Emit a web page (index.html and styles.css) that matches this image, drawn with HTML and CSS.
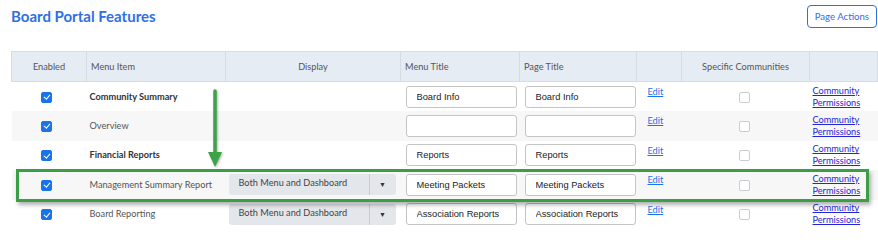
FILE: index.html
```html
<!DOCTYPE html>
<html>
<head>
  <meta charset="UTF-8">
  <title>Board Portal Features</title>
  <link rel="stylesheet" href="styles.css">
</head>
<body>
  <div class="page">
    <div class="topbar">
      <h1 class="title">Board Portal Features</h1>
      <button class="btn-outline">Page Actions</button>
    </div>

    <table class="features">
      <colgroup>
        <col class="c-enabled"><col class="c-item"><col class="c-display"><col class="c-mtitle">
        <col class="c-ptitle"><col class="c-edit"><col class="c-spec"><col class="c-perm">
      </colgroup>
      <thead>
        <tr>
          <th class="center">Enabled</th>
          <th>Menu Item</th>
          <th class="center">Display</th>
          <th>Menu Title</th>
          <th>Page Title</th>
          <th></th>
          <th class="center">Specific Communities</th>
          <th></th>
        </tr>
      </thead>
      <tbody>
        <tr>
          <td class="center"><span class="check on"></span></td>
          <td class="item strong">Community Summary</td>
          <td></td>
          <td class="field"><input class="txt" value="Board Info"></td>
          <td class="field"><input class="txt" value="Board Info"></td>
          <td class="edit"><a href="#">Edit</a></td>
          <td class="center"><span class="check"></span></td>
          <td class="perm"><a href="#">Community</a><a href="#">Permissions</a></td>
        </tr>
        <tr>
          <td class="center"><span class="check on"></span></td>
          <td class="item">Overview</td>
          <td></td>
          <td class="field"><input class="txt" value=""></td>
          <td class="field"><input class="txt" value=""></td>
          <td class="edit"><a href="#">Edit</a></td>
          <td class="center"><span class="check"></span></td>
          <td class="perm"><a href="#">Community</a><a href="#">Permissions</a></td>
        </tr>
        <tr>
          <td class="center"><span class="check on"></span></td>
          <td class="item strong">Financial Reports</td>
          <td></td>
          <td class="field"><input class="txt" value="Reports"></td>
          <td class="field"><input class="txt" value="Reports"></td>
          <td class="edit"><a href="#">Edit</a></td>
          <td class="center"><span class="check"></span></td>
          <td class="perm"><a href="#">Community</a><a href="#">Permissions</a></td>
        </tr>
        <tr>
          <td class="center"><span class="check on"></span></td>
          <td class="item">Management Summary Report</td>
          <td class="sel-cell"><div class="select"><span class="sel-text">Both Menu and Dashboard</span><span class="sel-arrow">&#9660;</span></div></td>
          <td class="field"><input class="txt" value="Meeting Packets"></td>
          <td class="field"><input class="txt" value="Meeting Packets"></td>
          <td class="edit"><a href="#">Edit</a></td>
          <td class="center"><span class="check"></span></td>
          <td class="perm"><a href="#">Community</a><a href="#">Permissions</a></td>
        </tr>
        <tr>
          <td class="center"><span class="check on"></span></td>
          <td class="item">Board Reporting</td>
          <td class="sel-cell"><div class="select"><span class="sel-text">Both Menu and Dashboard</span><span class="sel-arrow">&#9660;</span></div></td>
          <td class="field"><input class="txt" value="Association Reports"></td>
          <td class="field"><input class="txt" value="Association Reports"></td>
          <td class="edit"><a href="#">Edit</a></td>
          <td class="center"><span class="check"></span></td>
          <td class="perm"><a href="#">Community</a><a href="#">Permissions</a></td>
        </tr>
      </tbody>
    </table>

    <!-- annotation overlay -->
    <div class="callout-box"></div>
    <svg class="callout-arrow" width="24" height="90" viewBox="0 0 24 90">
      <line x1="10" y1="3" x2="10" y2="66" stroke="#3ca348" stroke-width="3.5" stroke-linecap="round"/>
      <polygon points="3,64 17,64 10,79" fill="#3ca348"/>
    </svg>
  </div>
</body>
</html>
```

FILE: styles.css
```css
body {
  margin: 0;
  background: #fff;
  font-family: "Lato", "Open Sans", sans-serif;
  color: #444;
}

.page {
  position: relative; /* overlay for the green callout */
  padding: 5px 1px 0 11px;
}

.topbar {
  display: flex;
  justify-content: space-between;
  align-items: flex-start;
  height: 46px;
}

.title {
  margin: 2px 0 0 0;
  font-size: 15px;
  font-weight: 700;
  color: #2f6fe4;
}

.btn-outline {
  height: 23px;
  padding: 0 7px;
  background: #fff;
  border: 1px solid #2f6fe4;
  border-radius: 4px;
  color: #2f6fe4;
  font-family: inherit;
  font-size: 9.6px;
}

.features {
  width: 866px;
  border-collapse: collapse;
  table-layout: fixed;
  font-size: 9.2px;
  line-height: 12px;
}

.c-enabled { width: 75px; }
.c-item { width: 139px; }
.c-display { width: 175px; }
.c-mtitle { width: 119px; }
.c-ptitle { width: 117px; }
.c-edit { width: 45px; }
.c-spec { width: 128px; }
.c-perm { width: 68px; }

.features th {
  height: 29px;
  background: #e6ecf4;
  border: 1px solid #d7dce2;
  font-weight: 400;
  color: #555;
  text-align: left;
  padding: 0 4px;
}

.features th.center, .features td.center { text-align: center; }

.features tbody tr { height: 29.5px; }

.features td {
  padding: 0;
  vertical-align: middle;
  white-space: nowrap;
}

.features tbody tr:nth-child(even) td { background: #f7f7f7; }

.item { padding-left: 3px !important; color: #555; }
.item.strong { font-weight: 700; color: #333; }

.check {
  display: inline-block;
  width: 9px;
  height: 9px;
  border: 1px solid #c9cdd2;
  border-radius: 2px;
  background: #fff;
  vertical-align: middle;
  margin-right: 2px;
}

.check.on {
  background: #1a73e8;
  border-color: #1a73e8;
  position: relative;
  margin-right: 5px;
}

.check.on::after {
  content: "";
  position: absolute;
  left: 2.5px;
  top: 0.5px;
  width: 2.5px;
  height: 5px;
  border: solid #fff;
  border-width: 0 1.2px 1.2px 0;
  transform: rotate(40deg);
}

.field { padding-left: 5px !important; }

.txt {
  display: block;
  box-sizing: border-box;
  width: 111px;
  height: 22px;
  margin: 0;
  border: 1px solid #c4c4c4;
  border-radius: 3px;
  padding: 0 10px;
  font-family: "Liberation Sans", Arial, sans-serif;
  font-size: 9.3px;
  color: #222;
  background: #fff;
}

.sel-cell { padding-left: 3px !important; }

.select {
  display: flex;
  width: 167px;
  height: 21px;
  border-radius: 3px;
  background: #e3e6ea;
}

.sel-text {
  flex: 1;
  padding: 3px 0 0 10px;
  color: #444;
  border-right: 1px solid #c8ccd1;
}

.sel-arrow {
  width: 26px;
  text-align: center;
  font-size: 7px;
  line-height: 21px;
  color: #333;
}

.edit { vertical-align: top !important; padding: 4px 0 0 11px !important; }
.edit a { color: #1a73e8; }

.perm { padding-left: 3px !important; }
.perm a { display: block; color: #2525d8; }

.callout-box {
  position: absolute;
  left: 16px;
  top: 169px;
  width: 847px;
  height: 27px;
  border: 3px solid #3a9e45;
  box-shadow: 2px 3px 4px rgba(0, 0, 0, 0.3);
}

.callout-arrow {
  position: absolute;
  left: 205px;
  top: 88px;
  filter: drop-shadow(1px 1px 1px rgba(0, 0, 0, 0.3));
}
```
